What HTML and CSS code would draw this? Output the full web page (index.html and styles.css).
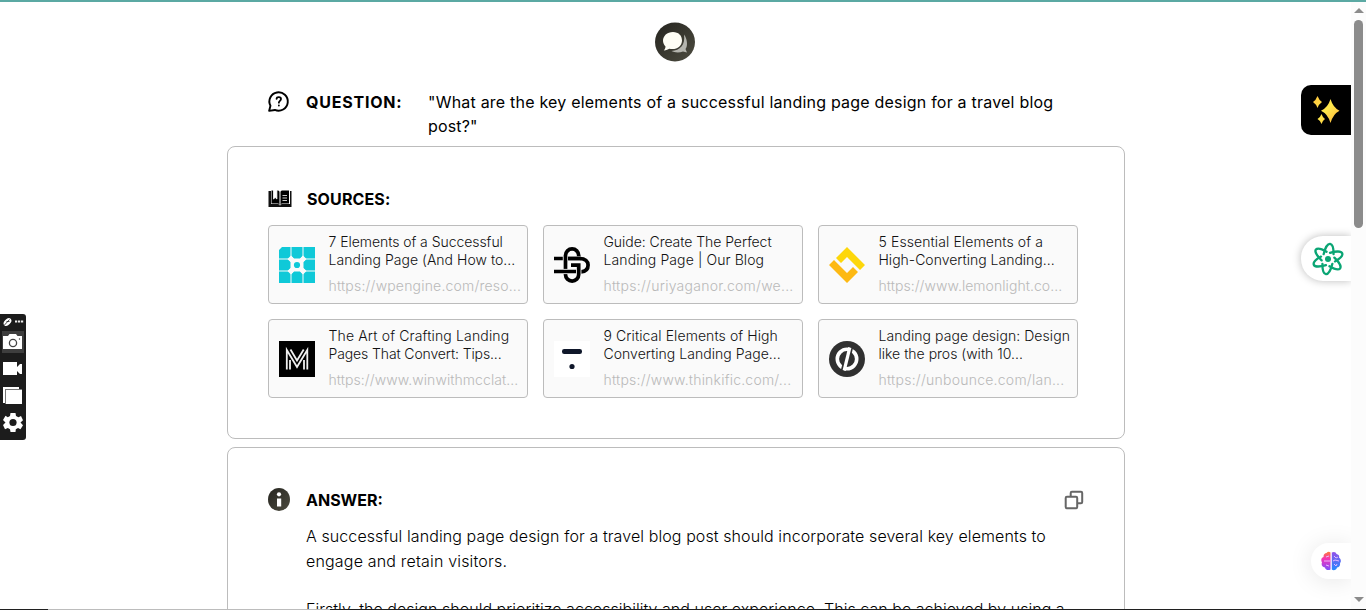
FILE: index.html
```
<!DOCTYPE html>
<html lang="en">
<head>
<meta charset="utf-8">
<title>Question and answer</title>
<link rel="stylesheet" href="styles.css">
</head>
<body>
<div class="page">
  <main class="column">
    <svg class="logo" viewBox="0 0 40 40">
      <defs><linearGradient id="olive" x1="0" y1="0" x2="1" y2="1"><stop offset="0" stop-color="#25241f"/><stop offset="1" stop-color="#4d4c40"/></linearGradient></defs>
      <ellipse cx="20" cy="20" rx="20" ry="19.6" fill="url(#olive)"/>
      <path d="M29 12.500C33 18 32.500 25 30.500 27L32 30.500L28 29.500C24 31 19 30.500 16.500 29C25 28.500 30.500 23 29 12.500Z" fill="#b5b5ae"/>
      <path d="M18 10C12 10 8 14 8 18.800C8 21 9 23 10.500 24.500C10.500 26 10 27.200 8.800 28.500C11.500 28.300 13 27.500 14.300 26.700C21 28.300 27 24.500 27 18.500C27 13.500 23.500 10 18 10Z" fill="#fffef5"/>
    </svg>
    <section class="question">
      <svg class="question-icon" viewBox="0 0 24 24" fill="none" stroke="#000" stroke-width="2" stroke-linecap="round" stroke-linejoin="round">
        <path d="M2.200 21.800L3.600 16.500A9.600 9.600 0 1 1 8.200 20.800Z"/>
        <path d="M10 9.200C10.200 6.900 14.600 6.900 14.600 9.500C14.600 11.200 12.400 11.500 12.400 13.200M12.400 16.200V16.300" stroke-width="1.900"/>
      </svg>
      <h2 class="heading question-heading">QUESTION:</h2>
      <p class="question-text"><span class="line q1">"What are the key elements of a successful landing page design for a travel blog</span><span class="line q2">post?"</span></p>
    </section>
    <section class="panel sources">
      <div class="panel-head sources-head">
        <svg class="book" viewBox="0 0 24 18"><path d="M1 1H3V14H10Q12 14 12 16Q12 14 14 14H22V1H23.500V17H.5V1Z" fill="#111"/><path d="M3.500.5H10Q11.500.5 11.500 2V14.500Q11 13.500 9.500 13.500H3.500ZM12.500 2Q12.500.5 14 .5H21V13.500H14.500Q13 13.500 12.500 14.500Z"/><path d="M5.500 0V9L7.200 7.500L8.900 9V0M14.500 5.500H19M14.500 8H19M14.500 10.500H19" fill="#fff" stroke="#fff" stroke-width=".8"/></svg>
        <h2 class="heading sources-heading">SOURCES:</h2>
      </div>
      <div class="cards">
        <a class="card">
          <svg class="favicon" viewBox="0 0 36 36" fill="#0fc9d8"><path d="M3 0H11.500V11.500H0V3ZM12.500 0H23.500V9L21 11.500H15L12.500 9ZM24.500 0H36V11.500H24.500ZM0 12.500H9L11.500 15V21L9 23.500H0ZM27 12.500H36V23.500H27L24.500 21V15ZM0 24.500H11.500V36H0ZM15 24.500H21L23.500 27V36H12.500V27ZM24.500 24.500H36V36H24.500Z"/><path d="M8.500 12L12 8.500L15 12L12 15ZM24 8.500L27.500 12L24 15L21 12ZM8.500 24L12 21L15 24L12 27.500ZM21 24L24 21L27.500 24L24 27.500Z" fill="#fafafa"/><circle cx="18" cy="18" r="3.100"/></svg>
          <div class="card-text"><span class="line t11">7 Elements of a Successful</span><span class="line t12">Landing Page (And How to...</span><span class="url u1">https://wpengine.com/reso...</span></div>
        </a>
        <a class="card">
          <svg class="favicon" viewBox="0 0 36 36" fill="none"><path d="M0 11.500H26C31 11.500 34.100 14.500 34.100 18C34.100 21.500 32 24.500 27 24.800" stroke="#000" stroke-width="3.700"/><path d="M11.500 22V8.500A6.600 6.600 0 0 1 24.700 8.500M24.700 18V27.500A6.600 6.600 0 0 1 11.500 27.500" stroke="#fafafa" stroke-width="5.400"/><path d="M11.500 22V8.500A6.600 6.600 0 0 1 24.700 8.500V9.200M17 18.200H24.700V27.500A6.600 6.600 0 0 1 11.500 27.500V27" stroke="#000" stroke-width="3.700"/><path d="M0 24.500H22" stroke="#fafafa" stroke-width="5.200"/><path d="M0 24.500H22M14 11.500H27" stroke="#000" stroke-width="3.700"/></svg>
          <div class="card-text"><span class="line t21">Guide: Create The Perfect</span><span class="line t22">Landing Page | Our Blog</span><span class="url u2">https://uriyaganor.com/we...</span></div>
        </a>
        <a class="card">
          <svg class="favicon" viewBox="0 0 36 36"><path d="M18 0L36 18L31 23L18 10L12 16L7 11Z" fill="#fdd70a"/><path d="M5 13L18 26L24 20L29 25L18 36L0 18Z" fill="#fdb913"/></svg>
          <div class="card-text"><span class="line t31">5 Essential Elements of a</span><span class="line t32">High-Converting Landing...</span><span class="url u3">https://www.lemonlight.co...</span></div>
        </a>
        <a class="card">
          <svg class="favicon" viewBox="0 0 36 36"><path d="M0 0H36V36H0Z"/><path d="M7.800 28.500V9L18 26L28.300 9V28.500M11 28.500V19M25 28.500V19M11.500 8.500L18 19.500L24.700 8.500" fill="none" stroke="#f0f0f0" stroke-width="1.800"/></svg>
          <div class="card-text"><span class="line t41">The Art of Crafting Landing</span><span class="line t42">Pages That Convert: Tips...</span><span class="url u4">https://www.winwithmcclat...</span></div>
        </a>
        <a class="card">
          <svg class="favicon" viewBox="0 0 36 36"><path d="M0 0H36V36H0Z" fill="#fff"/><rect x="8" y="8" width="20" height="5" rx="2.200" fill="#0f172a"/><circle cx="18" cy="25.500" r="2.600" fill="#0f172a"/></svg>
          <div class="card-text"><span class="line t51">9 Critical Elements of High</span><span class="line t52">Converting Landing Page...</span><span class="url u5">https://www.thinkific.com/...</span></div>
        </a>
        <a class="card">
          <svg class="favicon" viewBox="0 0 36 36" fill="none"><circle cx="18" cy="18" r="18" fill="#303030"/><circle cx="18" cy="18" r="9.700" stroke="#fff" stroke-width="3.600"/><path d="M23.200 5L19.500 20M16.500 16L12.700 31" stroke="#303030" stroke-width="2.600"/><path d="M20.800 6.500L15.200 29.500" stroke="#fff" stroke-width="3.200"/></svg>
          <div class="card-text"><span class="line t61">Landing page design: Design</span><span class="line t62">like the pros (with 10...</span><span class="url u6">https://unbounce.com/lan...</span></div>
        </a>
      </div>
    </section>
    <section class="panel answer">
      <div class="panel-head answer-head">
        <svg class="info" viewBox="0 0 22 23"><ellipse cx="11" cy="11.500" rx="11" ry="11.500" fill="url(#olive)"/><circle cx="11" cy="6.300" r="2.100" fill="#fff"/><path d="M9 10.500H13.200V18.500H9Z" fill="#fff"/></svg>
        <h2 class="heading answer-heading">ANSWER:</h2>
        <svg class="copy" viewBox="0 0 20 20" fill="none" stroke="#666" stroke-width="2"><rect x="6.700" y="1.800" width="11.500" height="11.500" rx="1.200"/><rect x="1.700" y="6.800" width="11.500" height="11.500" rx="1.200" fill="#fff"/></svg>
      </div>
      <div class="answer-text">
        <p><span class="line a1">A successful landing page design for a travel blog post should incorporate several key elements to</span><span class="line a2">engage and retain visitors.</span></p>
        <p><span class="line a3">Firstly, the design should prioritize accessibility and user experience. This can be achieved by using a</span></p>
      </div>
    </section>
  </main>
  <aside class="scrollbar"><i class="arrow-up"></i><i class="thumb"></i><i class="arrow-down"></i></aside>
  <aside class="capture">
    <svg viewBox="0 0 26 126">
      <rect x="-4" width="30" height="126" rx="3" fill="#1c1c1c"/>
      <ellipse cx="7.500" cy="8" rx="4.500" ry="3" transform="rotate(-45 7.500 8)" fill="#fff"/><path d="M4.500 11L9.500 5.500M6.500 7.500H9.500" stroke="#222" stroke-width=".8"/><path d="M15 7.500H17.200M18 7.500H20.200M21 7.500H23.200" stroke="#eee" stroke-width="1.800"/>
      <rect x="2" y="17" width="22" height="22" fill="#3e3e3e"/>
      <path d="M3 22H8L9.500 20H16L17.500 22H22V35H3Z" fill="#fff"/><circle cx="13" cy="29" r="3.600" fill="none" stroke="#444" stroke-width="1.300"/><circle cx="19.500" cy="25" r=".7" fill="#444"/>
      <path d="M3 48H17V53L20 50H22V60H20L17 57V61H3Z" fill="#fff"/>
      <path d="M3 73H19V75H5V89H3Z" fill="#fff"/><rect x="5" y="75" width="17" height="15" fill="#777"/><rect x="6" y="76" width="16" height="14" fill="#fff"/>
      <g transform="translate(13 108.500)"><path d="M-2.500-9.500H2.500L3-6.500L5.500-5.200L8-6.500L10-2.200L7.500 0L10 2.800L7.500 6.700L5 5.500L2.800 6.800L2.500 9.500H-2.500L-3 6.800L-5.200 5.500L-8 6.700L-10 2.500L-7.500 0L-10-2.500L-7.500-6.700L-5.200-5.300L-3-6.500Z" fill="#fff"/><circle r="3.600" fill="#1c1c1c"/></g>
    </svg>
  </aside>
  <aside class="sparkle">
    <svg viewBox="0 0 50 50"><defs><linearGradient id="gold" x1="0" y1="0" x2="1" y2="1"><stop stop-color="#ffc43b"/><stop offset=".5" stop-color="#ffe94c"/><stop offset="1" stop-color="#ffae38"/></linearGradient></defs><path d="M29.500 14Q32 22.500 38.500 25.700Q32 29 29.500 38Q27 29 20 25.700Q27 22.500 29.500 14ZM16.500 11Q18 15 21 17Q18 19 16.500 23Q15 19 12 17Q15 15 16.500 11ZM20.500 29Q21.700 32.500 24 34Q21.700 35.500 20.500 39Q19.300 35.500 16.500 34Q19.300 32.500 20.500 29Z" fill="url(#gold)"/></svg>
  </aside>
  <aside class="atom">
    <svg viewBox="0 0 32 34" fill="none" stroke="#0aa574" stroke-width="2.300" stroke-linecap="round"><circle cx="16" cy="17" r="3" fill="#0aa574" stroke="none"/><ellipse class="orbit" cx="16" cy="17" rx="5.200" ry="15.300" pathLength="100" transform="rotate(8 16 17)"/><ellipse class="orbit" cx="16" cy="17" rx="5.200" ry="15.300" pathLength="100" transform="rotate(68 16 17)"/><ellipse class="orbit" cx="16" cy="17" rx="5.200" ry="15.300" pathLength="100" transform="rotate(128 16 17)"/></svg>
  </aside>
  <aside class="brain">
    <svg viewBox="0 0 20 20"><defs><linearGradient id="warm" x1="0" y1="0" x2="0" y2="1"><stop offset="0" stop-color="#ff7a38"/><stop offset=".4" stop-color="#f432b8"/><stop offset="1" stop-color="#7b50ff"/></linearGradient><linearGradient id="cool" x1="0" y1="0" x2="0" y2="1"><stop offset="0" stop-color="#9450e8"/><stop offset="1" stop-color="#248bff"/></linearGradient></defs><path d="M9.500 1.500V18.500C7 20 4 18.500 4 16.500C1 16 0 13.500 1 11.500C-.5 9 .5 6.500 2.500 6C2.500 3 4 2 5.500 2C6.500.5 8.500.3 9.500 1.500Z" fill="url(#warm)"/><path d="M10.800 1.500C13 .3 15 1 15.500 3C18 3.500 18.500 5 18 6.500C20 8 20.500 10.500 19 12C19.500 15 18 16.500 16 16.500C15.500 19 12.500 20 10.800 18.500Z" fill="url(#cool)"/><path d="M3 10H9M5 6L8 5M5 14L8 15M13 5L15 7L17 6M12 10L14 9L18 10M13 13L15 15L16 13" fill="none" stroke="#e5b8ff" stroke-width="1"/></svg>
  </aside>
  <i class="top-edge"></i><i class="bottom-edge"></i>
</div>
</body>
</html>
```
FILE: styles.css
```
* { box-sizing: border-box; }
body { margin: 0; background: #fff; color: #000; font-family: Inter, "Liberation Sans", sans-serif; overflow: hidden; }
svg { display: block; flex: none; }
p, h2 { margin: 0; }
.page { position: relative; width: 1366px; height: 610px; overflow: hidden; }
.column { width: 898px; margin-left: 227px; padding-top: 22px; display: flex; flex-direction: column; }
.logo { width: 40px; height: 40px; margin-left: 428px; }
.heading { font-size: 16px; line-height: 24px; font-weight: 700; white-space: nowrap; }
.line { display: block; width: max-content; white-space: nowrap; }
.question { height: 84px; display: flex; padding: 28px 0 0 40px; }
.question-icon { width: 23px; height: 23px; }
.question-heading { width: 98px; margin: 0 24px 0 16px; letter-spacing: .78px; }
.question-text { font-size: 16px; line-height: 24px; }
.q1 { letter-spacing: .21px; }
.q2 { letter-spacing: .15px; }
.panel { border: 1px solid #bcbcbc; border-radius: 8px; }
.panel-head { display: flex; align-items: center; }
.sources { height: 293px; padding: 40px 46px 0 40px; }
.sources-head { height: 24px; gap: 15px; }
.sources-heading { letter-spacing: .12px; }
.book { width: 24px; height: 18px; }
.cards { margin-top: 14px; display: grid; grid-template-columns: repeat(3, 260px); gap: 15px; }
.card { height: 79px; border: 1px solid #bcbcbc; border-radius: 4px; background: #fafafa; display: flex; align-items: center; padding-left: 10px; gap: 13.5px; }
.favicon { width: 36px; height: 36px; }
.card-text { height: 77px; padding-top: 7px; font-size: 14px; line-height: 18px; font-weight: 300; color: #111; }
.url { display: block; margin-top: 8px; color: #b9b9b9; white-space: nowrap; }
.t11 { letter-spacing: -.05px; }
.t12 { letter-spacing: .03px; }
.t21 { letter-spacing: -.05px; }
.t22 { letter-spacing: .1px; }
.t31 { letter-spacing: .1px; }
.t41 { letter-spacing: .15px; }
.t42 { letter-spacing: -.12px; }
.t51 { letter-spacing: .08px; }
.t52 { letter-spacing: .03px; }
.t61 { letter-spacing: .06px; }
.u1 { letter-spacing: .19px; }
.u2 { letter-spacing: .26px; }
.u3 { letter-spacing: .05px; }
.u4 { letter-spacing: .08px; }
.u5 { letter-spacing: .21px; }
.u6 { letter-spacing: .24px; }
.answer { margin-top: 8px; height: 260px; padding: 40px 40px 0; }
.answer-head { height: 24px; }
.info { width: 22px; height: 23px; margin-top: -1px; }
.answer-heading { margin-left: 16px; }
.copy { width: 20px; height: 20px; margin-left: auto; }
.answer-text { margin: 12px 0 0 38px; font-size: 16px; line-height: 25px; font-weight: 300; color: #000; }
.answer-text p + p { margin-top: 23px; }
.a1 { letter-spacing: .093px; }
.a2 { letter-spacing: .18px; }
.a3 { letter-spacing: .03px; }
.scrollbar { position: absolute; right: 0; top: 2px; width: 15px; height: 607px; background: #fcfcfc; }
.thumb { position: absolute; left: 3px; top: 18px; width: 9px; height: 208px; border-radius: 5px; background: #8b8b8b; }
.arrow-up, .arrow-down { position: absolute; left: 3px; border: 5px solid transparent; }
.arrow-up { top: 1px; border-bottom-color: #8b8b8b; }
.arrow-down { bottom: 2px; border-top-color: #8b8b8b; }
.capture { position: absolute; left: 0; top: 314px; width: 26px; height: 126px; }
.sparkle { position: absolute; left: 1301px; top: 85px; width: 50px; height: 50px; background: #000; border-radius: 10px 0 0 10px; }
.atom { position: absolute; left: 1301px; top: 236px; width: 50px; height: 45px; padding: 6px 0 0 11px; background: #fff; border-radius: 22px 0 0 22px; box-shadow: 0 0 8px #0004; clip-path: inset(-20px 0 -20px -20px); }
.atom svg { width: 32px; height: 34px; }
.orbit { stroke-dasharray: 36 14; stroke-dashoffset: -6; }
.brain { position: absolute; left: 1311px; top: 543px; width: 40px; height: 36px; padding: 8px 0 0 10px; background: #fff; border-radius: 18px 0 0 18px; box-shadow: 0 2px 24px #0000001a; clip-path: inset(-40px 0 -40px -40px); }
.brain svg { width: 20px; height: 20px; }
.top-edge { position: absolute; left: 0; top: 0; width: 1366px; height: 2px; background: #5ba9a3; }
.bottom-edge { position: absolute; left: 0; bottom: 0; width: 1366px; height: 1px; background: linear-gradient(90deg, #202020 48px, #bcbcbc 48px 330px, #202020 330px); }
```
